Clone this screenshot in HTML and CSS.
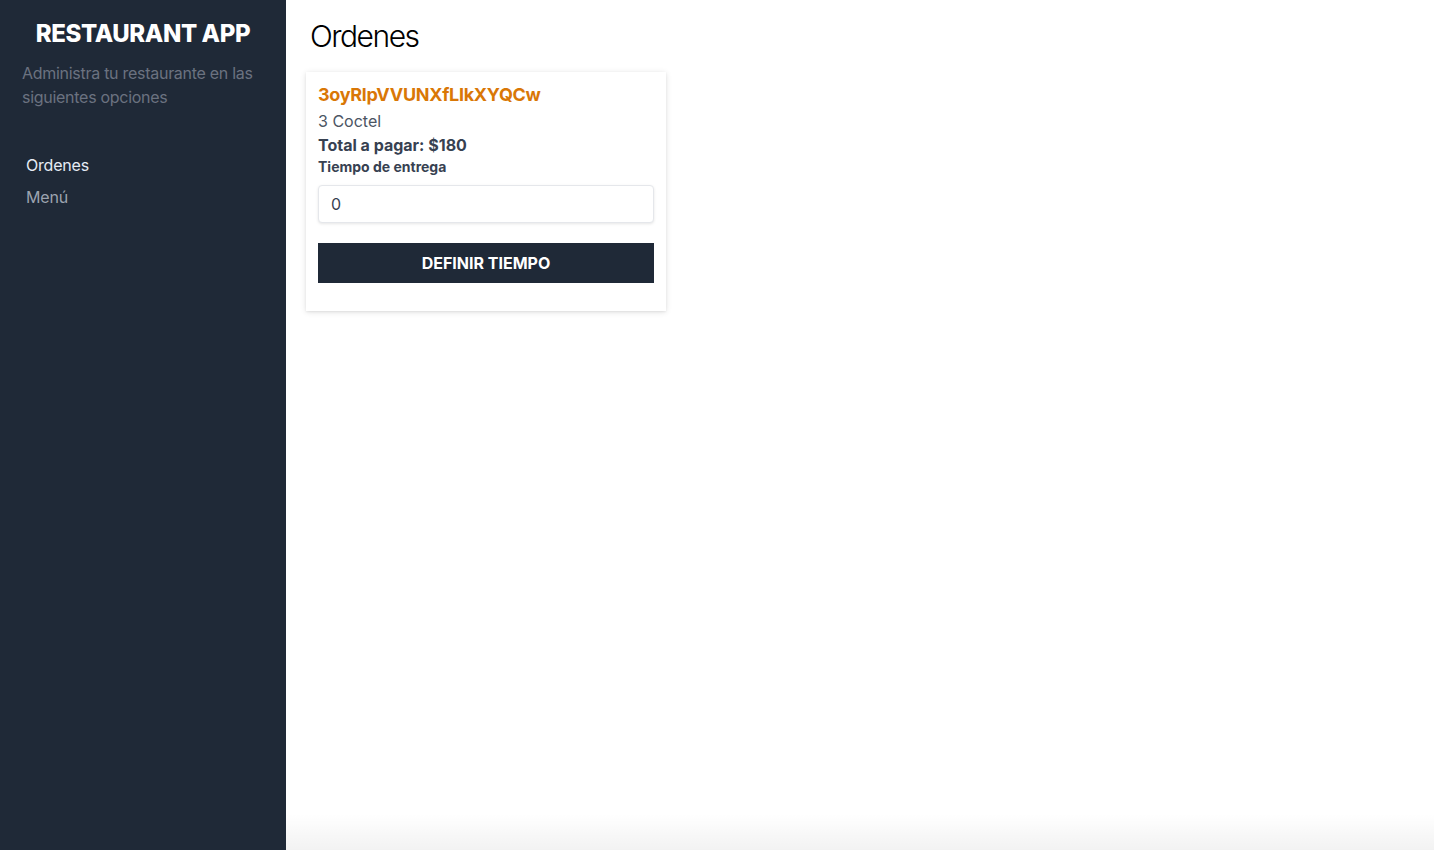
FILE: index.html
```html
<!DOCTYPE html>
<html lang="es">
<head>
<meta charset="utf-8">
<title>Restaurant App</title>
<link rel="stylesheet" href="styles.css">
</head>
<body>
<div class="layout">
  <aside class="sidebar">
    <h1 class="brand">RESTAURANT APP</h1>
    <p class="subtitle">Administra tu restaurante en las siguientes opciones</p>
    <nav class="nav">
      <a class="nav-link active" href="#">Ordenes</a>
      <a class="nav-link" href="#">Menú</a>
    </nav>
  </aside>
  <main class="main">
    <h2 class="page-title">Ordenes</h2>
    <div class="card">
      <p class="order-id">3oyRlpVVUNXfLIkXYQCw</p>
      <p class="item">3 Coctel</p>
      <p class="total">Total a pagar: $180</p>
      <label class="label" for="tiempo">Tiempo de entrega</label>
      <input class="input" id="tiempo" type="number" value="0">
      <button class="btn" type="button">DEFINIR TIEMPO</button>
    </div>
  </main>
</div>
</body>
</html>
```
FILE: styles.css
```css
* { box-sizing: border-box; }
html, body { margin: 0; padding: 0; height: 100%; }
body {
  font-family: Inter, "Noto Sans", "Liberation Sans", sans-serif;
  color: #000;
  background: #fff;
}
.layout {
  display: flex;
  min-height: 100vh;
}
.sidebar {
  width: 286px;
  flex: 0 0 286px;
  background: #1f2937;
  padding: 20px 22px;
}
.brand {
  margin: 0;
  color: #fff;
  font-size: 24px;
  line-height: 28px;
  font-weight: 800;
  text-align: center;
  letter-spacing: -0.4px;
}
.subtitle {
  margin: 13px 0 0;
  color: #6b7280;
  font-size: 16px;
  line-height: 24px;
  letter-spacing: -0.28px;
}
.nav {
  margin-top: 44px;
  display: flex;
  flex-direction: column;
  padding-left: 4px;
}
.nav-link {
  display: block;
  font-size: 16px;
  line-height: 24px;
  color: #9ca3af;
  text-decoration: none;
  margin-bottom: 8px;
  letter-spacing: -0.2px;
}
.nav-link.active { color: #e6ecf5; }
.main {
  flex: 1;
  padding: 16px 20px;
  background: linear-gradient(to bottom, rgba(0,0,0,0) 0, rgba(0,0,0,0) calc(100% - 36px), rgba(0,0,0,0.05) 100%);
}
.page-title {
  margin: 0 0 0 4px;
  font-size: 30px;
  line-height: 40px;
  font-weight: 300;
  color: #000;
  letter-spacing: -1.5px;
}
.card {
  margin-top: 16px;
  width: 360px;
  background: #fff;
  padding: 9px 12px 28px;
  box-shadow: 0 1px 6px rgba(0,0,0,0.12), 0 1px 2px rgba(0,0,0,0.06);
}
.order-id {
  margin: 0;
  color: #d97706;
  font-size: 18px;
  line-height: 28px;
  font-weight: 700;
  letter-spacing: -0.3px;
}
.item {
  margin: 0;
  color: #4b5563;
  font-size: 16px;
  line-height: 24px;
}
.total {
  margin: 0;
  color: #374151;
  font-size: 16px;
  line-height: 24px;
  font-weight: 700;
}
.label {
  display: block;
  color: #374151;
  font-size: 14px;
  line-height: 20px;
  font-weight: 700;
}
.input {
  display: block;
  width: 100%;
  margin-top: 8px;
  height: 38px;
  border: 1px solid #e5e7eb;
  border-radius: 4px;
  box-shadow: 0 1px 3px rgba(0,0,0,0.1);
  padding: 0 12px;
  font-family: inherit;
  font-size: 16px;
  color: #374151;
  -moz-appearance: textfield;
  appearance: textfield;
  outline: none;
}
.input::-webkit-outer-spin-button,
.input::-webkit-inner-spin-button { -webkit-appearance: none; margin: 0; }
.btn {
  display: block;
  width: 100%;
  margin-top: 20px;
  height: 40px;
  border: 0;
  background: #1f2937;
  color: #fff;
  font-family: inherit;
  font-size: 16px;
  font-weight: 700;
  cursor: pointer;
}
```
